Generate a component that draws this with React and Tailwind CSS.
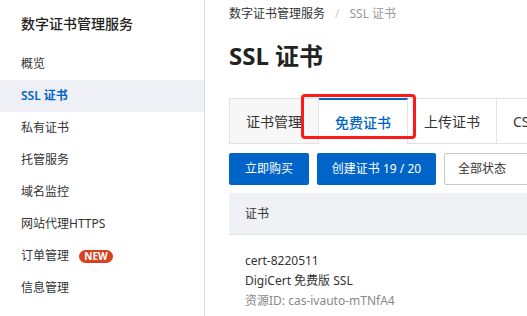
import React from 'react';

const menu = [
    { label: '概览' },
    { label: 'SSL 证书', active: true },
    { label: '私有证书' },
    { label: '托管服务' },
    { label: '域名监控' },
    { label: '网站代理HTTPS' },
    { label: '订单管理', badge: 'NEW' },
    { label: '信息管理' },
];

const tabs = ['证书管理', '免费证书', '上传证书', 'CSR 管理'];

const Sidebar = () => (
    <div className="w-[205px] shrink-0 border-r border-[#d9d9d9] bg-white">
        <div className="h-[46px] flex items-center px-[21px] text-[14px] font-medium text-[#222]">
            数字证书管理服务
        </div>
        <div className="mt-[2px]">
            {menu.map((item) => (
                <div
                    key={item.label}
                    className={
                        item.active
                            ? 'h-[32px] flex items-center px-[21px] text-[12px] font-semibold text-[#0064c8] bg-[#eef0f5]'
                            : 'h-[32px] flex items-center px-[21px] text-[12px] text-[#333]'
                    }
                >
                    {item.label}
                    {item.badge && (
                        <span className="ml-[10px] h-[13px] w-[34px] flex items-center justify-center rounded-full bg-[#d4421f] text-white text-[10px] font-bold leading-none">
                            {item.badge}
                        </span>
                    )}
                </div>
            ))}
        </div>
    </div>
);

const App = () => {
    return (
        <div className="flex w-[527px] h-[316px] overflow-hidden bg-white font-['Noto_Sans','Noto_Sans_CJK_SC',sans-serif]">
            <Sidebar />
            <div className="flex-1 min-w-0 overflow-hidden pl-[24px]">
                <div className="w-[700px]">
                    <div className="h-[28px] flex items-center text-[12px]">
                        <span className="text-[#333]">数字证书管理服务</span>
                        <span className="mx-[10px] text-[#ccc]">/</span>
                        <span className="text-[#999]">SSL 证书</span>
                    </div>
                    <h1 className="h-[56px] flex items-center text-[24px] font-bold text-[#222]">SSL 证书</h1>

                    <div className="relative mt-[14px] flex h-[46px]">
                        {tabs.map((t, i) => (
                            <div
                                key={t}
                                className={
                                    i === 1
                                        ? 'h-[46px] px-4 flex items-center text-[14px] whitespace-nowrap text-[#0064c8] font-medium bg-white border-t-2 border-t-[#0064c8] border-r border-r-[#e3e3e3]'
                                        : i === 0
                                        ? 'h-[46px] px-4 flex items-center text-[14px] whitespace-nowrap text-[#333] bg-[#f7f7f7] border border-[#e3e3e3]'
                                        : 'h-[46px] px-4 flex items-center text-[14px] whitespace-nowrap text-[#333] bg-white border-y border-r border-[#e3e3e3]'
                                }
                            >
                                {t}
                            </div>
                        ))}
                        <div className="absolute left-[72px] top-[-4px] w-[115px] h-[45px] border-[3px] border-[#ff1a1a] rounded-[4px] pointer-events-none" />
                    </div>

                    <div className="mt-[9px] flex gap-2">
                        <button className="h-[32px] w-[80px] rounded-[2px] bg-[#0064c8] text-white text-[12px]">立即购买</button>
                        <button className="h-[32px] w-[119px] rounded-[2px] bg-[#0064c8] text-white text-[12px]">创建证书 19 / 20</button>
                        <div className="h-[32px] w-[160px] px-[13px] flex items-center rounded-[2px] border border-[#c8c8c8] text-[12px] text-[#333]">
                            全部状态
                        </div>
                    </div>

                    <div className="mt-2 h-[42px] flex items-center px-4 bg-[#eff1f5] border-b border-[#e3e3e3] text-[12px] text-[#333]">
                        证书
                    </div>
                    <div className="px-4 pt-[16px] text-[12px] leading-[20px]">
                        <div className="text-[#333]">cert-8220511</div>
                        <div className="text-[#333]">DigiCert 免费版 SSL</div>
                        <div className="text-[#888]">资源ID: cas-ivauto-mTNfA4</div>
                    </div>
                </div>
            </div>
        </div>
    );
};

export default App;
